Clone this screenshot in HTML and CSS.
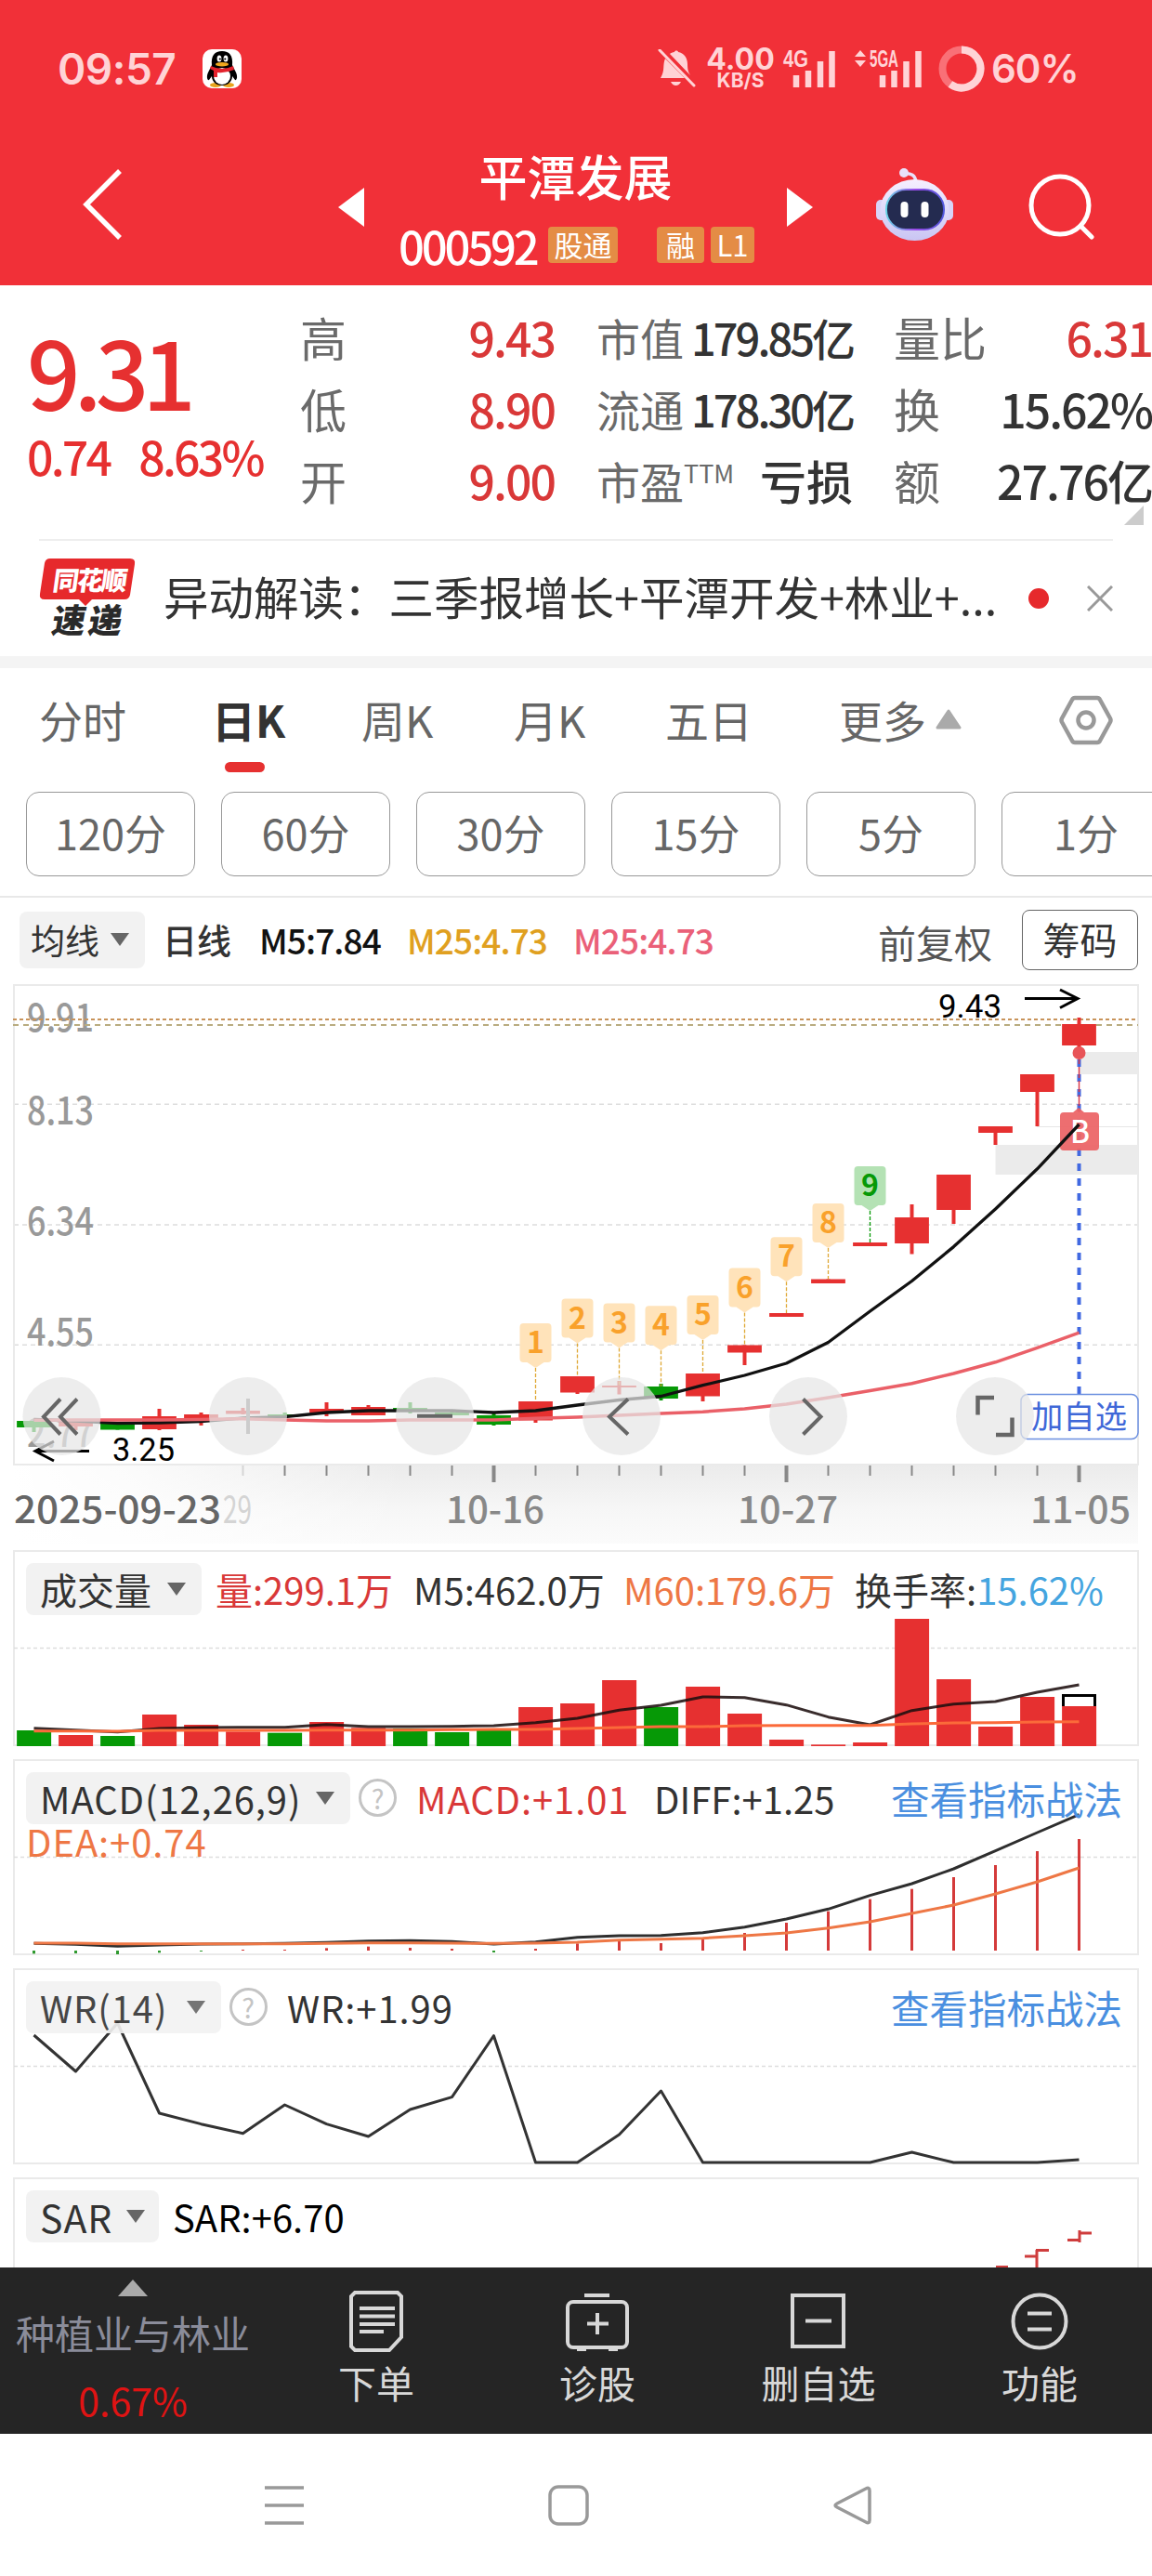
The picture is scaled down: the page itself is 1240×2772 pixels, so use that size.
FILE: index.html
```
<!DOCTYPE html>
<html lang="zh-CN">
<head>
  <meta charset="UTF-8" />
  <meta name="viewport" content="width=device-width, initial-scale=1.0" />
  <title>平潭发展 000592</title>
  <link rel="stylesheet" href="styles.css">
</head>
<body>
  <header>
    <div class="status-bar">
      <span class="clock">09:57</span>
      <svg class="qq" width="44" height="44" viewBox="0 0 44 44">
        <rect x="1" y="1" width="42" height="42" rx="10" fill="#fff"/>
        <ellipse cx="15" cy="39.500" rx="6" ry="2.500" fill="#e8a41c"/><ellipse cx="29" cy="39.500" rx="6" ry="2.500" fill="#e8a41c"/>
        <path d="M11 18C10 8 14 3 22 3s12 5 11 15l4 8c2 4 1 9-1 8l-3-4c0 6-5 10-11 10S11 36 11 30l-3 4c-2 1-3-4-1-8z" fill="#000"/>
        <ellipse cx="22" cy="30" rx="9" ry="9" fill="#fff"/>
        <path d="M10 19q12 6 24 0l1 4q-9 4-18 3v5h-4v-7l-4-2z" fill="#e3222c"/>
        <ellipse cx="19" cy="11" rx="2.400" ry="3.500" fill="#fff"/><ellipse cx="26" cy="11" rx="2.400" ry="3.500" fill="#fff"/>
        <circle cx="19.800" cy="11.500" r="1.100"/><circle cx="25.300" cy="11.500" r="1.100"/>
        <ellipse cx="22" cy="17.200" rx="7" ry="2.300" fill="#f0a81e"/>
      </svg>
      <svg class="bell" width="42" height="42" viewBox="0 0 42 42">
        <path d="M8 10C5 17 8 23 3 31h26z M13 5c1-1 3-2 5-2 0-2 4-2 4 0 6 1 10 6 10 13 0 6 1 9 3 12zM14 35h11q-2 4-5.500 4T14 35z" fill="#ffd3d6"/>
        <path d="M2 1l37 38" stroke="#ffd3d6" stroke-width="3" stroke-linecap="round"/>
      </svg>
      <div class="speed"><b>4.00</b><span>KB/S</span></div>
      <svg class="signal" width="58" height="44" viewBox="0 0 58 44">
        <text x="0" y="20" textLength="27" lengthAdjust="spacingAndGlyphs">4G</text>
        <path d="M14 29v13M27 24v18M40 14v28M52.500 3v39" />
      </svg>
      <svg class="signal" width="74" height="44" viewBox="0 0 74 44">
        <path class="arrows" d="M1 9l6-7 6 7zM1 13h12l-6 7z"/>
        <text x="17" y="20" textLength="31" lengthAdjust="spacingAndGlyphs">5GA</text>
        <path d="M31 29v13M43.500 24v18M56.500 14v28M69.500 3v39" />
      </svg>
      <svg class="battery" width="50" height="50" viewBox="0 0 50 50">
        <circle cx="25" cy="25" r="20.500" fill="none" stroke="#f97077" stroke-width="8"/>
        <path d="M25 4.500A20.500 20.500 0 1 1 12.900 41.600" fill="none" stroke="#ffd3d6" stroke-width="8"/>
      </svg>
      <span class="percent">60%</span>
    </div>
    <div class="title-bar">
      <svg class="back" width="46" height="80" viewBox="0 0 46 80"><path d="M41 4L5 40l36 36" fill="none" stroke="#fff" stroke-width="5.500"/></svg>
      <svg class="prev" width="28" height="42" viewBox="0 0 28 42"><path d="M28 0v42L0 21z" fill="#fff"/></svg>
      <div class="stock">
        <h1>平潭发展</h1>
        <div class="code"><span class="no">000592</span><i class="t1">股通</i><i class="t2">融</i><i class="t3">L1</i></div>
      </div>
      <svg class="next" width="28" height="42" viewBox="0 0 28 42"><path d="M0 0v42l28-21z" fill="#fff"/></svg>
      <svg class="robot" width="86" height="80" viewBox="0 0 86 80">
        <defs>
          <linearGradient id="shell" x1="0" y1="0" x2="0" y2="1"><stop offset="0" stop-color="#f6efff"/><stop offset="1" stop-color="#c9c5f3"/></linearGradient>
          <linearGradient id="rim" x1="0" y1="0" x2="1" y2="0"><stop offset="0" stop-color="#68d5e6"/><stop offset=".5" stop-color="#9a4be8"/><stop offset="1" stop-color="#5058dc"/></linearGradient>
        </defs>
        <path d="M31 7q13-2 14 9" fill="none" stroke="#e9e0fa" stroke-width="3.500"/>
        <circle cx="32" cy="6" r="5" fill="#e9e0fa"/>
        <rect x="2" y="35" width="12" height="22" rx="5" fill="#d8d4f7"/><rect x="73" y="35" width="12" height="22" rx="5" fill="#d8d4f7"/>
        <ellipse cx="43.500" cy="46" rx="37" ry="33" fill="url(#shell)"/>
        <rect x="13" y="24" width="62" height="43" rx="21" fill="#242b50" stroke="url(#rim)" stroke-width="2"/>
        <rect x="28.500" y="37" width="8" height="17" rx="4" fill="#fff"/><rect x="50.500" y="37" width="8" height="17" rx="4" fill="#fff"/>
      </svg>
      <svg class="search" width="74" height="74" viewBox="0 0 74 74"><g fill="none" stroke="#fff" stroke-width="5"><circle cx="35" cy="35" r="31"/><path d="M57 57l12 12" stroke-linecap="round"/></g></svg>
    </div>
  </header>

  <section class="quote">
    <div class="price">
      <div class="now">9.31</div>
      <div class="chg"><span>0.74</span><span>8.63%</span></div>
    </div>
    <dl class="c1">
      <dt>高</dt><dd class="up">9.43</dd>
      <dt>低</dt><dd class="up">8.90</dd>
      <dt>开</dt><dd class="up">9.00</dd>
    </dl>
    <dl class="c2">
      <dt>市值</dt><dd>179.85亿</dd>
      <dt>流通</dt><dd>178.30亿</dd>
      <dt>市盈<sup>TTM</sup></dt><dd class="cn">亏损</dd>
    </dl>
    <dl class="c3">
      <dt>量比</dt><dd class="up">6.31</dd>
      <dt>换</dt><dd>15.62%</dd>
      <dt>额</dt><dd>27.76亿</dd>
    </dl>
    <svg class="corner" width="21" height="21" viewBox="0 0 21 21"><path d="M21 0v21H0z" fill="#ccc"/></svg>
  </section>

  <section class="news">
    <svg width="108" height="92" viewBox="0 0 108 92">
      <path d="M12 3h86q6 0 5 6l-5 33q-1 5-6 5H57l-7 7-7-7H6q-6 0-5-6l5-33q1-5 6-5z" fill="#e6292c"/>
      <text class="l1" x="14" y="37" textLength="80" transform="skewX(-8) translate(5 0)">同花顺</text>
      <text class="l2" x="16" y="83" textLength="75" transform="skewX(-10) translate(11 0)">速递</text>
    </svg>
    <p>异动解读：三季报增长+平潭开发+林业+...</p>
    <span class="dot"></span>
    <svg class="close" width="28" height="28" viewBox="0 0 28 28"><path d="M1 1l26 26M27 1L1 27" stroke="#999" stroke-width="3"/></svg>
  </section>

  <nav class="tabs">
    <a>分时</a><a class="active">日K</a><a>周K</a><a>月K</a><a>五日</a>
    <a>更多<svg width="28" height="22" viewBox="0 0 28 22"><path d="M14 2l12 18H2z" fill="#aaa" stroke="#aaa" stroke-width="3" stroke-linejoin="round"/></svg></a>
    <svg class="gear" width="58" height="54" viewBox="0 0 58 54"><g fill="none" stroke="#999" stroke-width="4.500" stroke-linejoin="round"><path d="M17 3h24q2 0 3 2l11 20q1 2 0 4L44 49q-1 2-3 2H17q-2 0-3-2L3 29q-1-2 0-4L14 5q1-2 3-2z"/><circle cx="29" cy="27" r="8.500"/></g></svg>
  </nav>
  <div class="pills"><span>120分</span><span>60分</span><span>30分</span><span>15分</span><span>5分</span><span>1分</span></div>

  <div class="ma">
    <span class="drop">均线<svg class="tri" viewBox="0 0 20 14"><path d="M0 0h20L10 14z"/></svg></span>
    <span class="day">日线</span>
    <span class="m5">M5:7.84</span>
    <span class="m25">M25:4.73</span>
    <span class="m25 pink">M25:4.73</span>
    <span class="fq">前复权</span>
    <span class="chip">筹码</span>
  </div>

  <svg class="chart" id="kline" width="1240" height="610" viewBox="0 1050 1240 610"></svg>

  <section class="panel">
    <svg class="chart" id="vol" width="1240" height="225" viewBox="0 1660 1240 225"></svg>
    <div class="head vol-head">
      <span class="drop">成交量<svg class="tri" viewBox="0 0 20 14"><path d="M0 0h20L10 14z"/></svg></span>
      <span class="up">量:299.1万</span><span>M5:462.0万</span><span class="orange">M60:179.6万</span><span>换手率:<em>15.62%</em></span>
    </div>
  </section>
  <section class="panel">
    <svg class="chart" id="macd" width="1240" height="225" viewBox="0 1885 1240 225"></svg>
    <div class="head macd-head">
      <span class="drop">MACD(12,26,9)<svg class="tri" viewBox="0 0 20 14"><path d="M0 0h20L10 14z"/></svg></span>
      <span class="help">?</span>
      <span class="up">MACD:+1.01</span><span class="diff">DIFF:+1.25</span><span class="link">查看指标战法</span>
      <span class="orange dea">DEA:+0.74</span>
    </div>
  </section>
  <section class="panel">
    <svg class="chart" id="wr" width="1240" height="225" viewBox="0 2110 1240 225"></svg>
    <div class="head wr-head">
      <span class="drop">WR(14)<svg class="tri" viewBox="0 0 20 14"><path d="M0 0h20L10 14z"/></svg></span>
      <span class="help">?</span>
      <span>WR:+1.99</span><span class="link">查看指标战法</span>
    </div>
  </section>
  <section class="panel sar">
    <svg class="chart" id="sar" width="1240" height="104" viewBox="0 2335 1240 104"></svg>
    <div class="head sar-head">
      <span class="drop">SAR<svg class="tri" viewBox="0 0 20 14"><path d="M0 0h20L10 14z"/></svg></span>
      <span class="black">SAR:+6.70</span>
    </div>
  </section>

  <div class="bottom-nav">
    <a class="sector">
      <svg width="32" height="18" viewBox="0 0 32 18"><path d="M16 0l16 18H0z" fill="#aaa"/></svg>
      <span>种植业与林业</span>
      <b>0.67%</b>
    </a>
    <a>
      <svg width="68" height="68" viewBox="0 0 68 68"><path d="M11 3h46l4 4v44L48 65H11l-4-4V7z M16 20h38M16 28.500h38M16 37h38M16 45h26"/></svg>
      <span>下单</span>
    </a>
    <a>
      <svg width="72" height="68" viewBox="0 0 72 68"><rect x="4" y="13" width="64" height="49" rx="6"/><path d="M22 6h27M36 25v23M25 36.500h23M14 64h10M48 64h10"/></svg>
      <span>诊股</span>
    </a>
    <a>
      <svg width="68" height="68" viewBox="0 0 68 68"><path d="M6 6h55v55H6zM20 33.500h28"/></svg>
      <span>删自选</span>
    </a>
    <a>
      <svg width="68" height="68" viewBox="0 0 68 68"><circle cx="34" cy="34" r="28.500"/><path d="M21 25.500h26M21 42.500h26"/></svg>
      <span>功能</span>
    </a>
  </div>
  <div class="system-nav">
    <svg width="44" height="44" viewBox="0 0 44 44"><path d="M1 3h42M1 22h42M1 41h42"/></svg>
    <svg width="44" height="44" viewBox="0 0 44 44"><rect x="2" y="2" width="40" height="40" rx="9"/></svg>
    <svg width="44" height="44" viewBox="0 0 44 44"><path d="M36 4Q40 2 40 6v32q0 4-4 2L5 24q-4-2 0-4z"/></svg>
  </div>

  <script>
    const RED = '#e63030', GREEN = '#069906';
    const X = i => 36.5 + 45 * i;
    const line = (x1, y1, x2, y2, color, w, dash) =>
      `<line x1="${x1}" y1="${y1}" x2="${x2}" y2="${y2}" stroke="${color}" stroke-width="${w}"${dash ? ` stroke-dasharray="${dash}"` : ''}/>`;
    const rect = (x, y, w, h, fill, extra) => `<rect x="${x}" y="${y}" width="${w}" height="${h}" fill="${fill}" ${extra || ''}/>`;
    const poly = (ys, color, w) =>
      `<polyline points="${ys.map((y, i) => X(i) + ',' + y).join(' ')}" fill="none" stroke="${color}" stroke-width="${w}" stroke-linejoin="round"/>`;
    const text = (x, y, w, size, color, str, extra) =>
      `<text x="${x}" y="${y}" textLength="${w}" lengthAdjust="spacingAndGlyphs" font-size="${size}" fill="${color}" ${extra || ''}>${str}</text>`;
    const frame = (y, h) => rect(15, y, 1210, h, 'none', 'stroke="#eaeaea" stroke-width="2"');
    const draw = (id, html) => document.getElementById(id).innerHTML = html;

    // high, top, bottom, low
    const candles = [
      ['g',1528,1528,1535,1540],['r',1526,1529,1534,1538],['g',1529,1530,1537.5,1537.5],['r',1515,1523,1537,1538],['r',1519,1521,1525,1533],
      ['r',1514,1517,1520.500,1521],['g',1519,1521,1523,1523],['r',1508,1515,1519,1523],['r',1511,1513,1522,1522],['g',1508,1514,1517,1520],
      ['g',1518,1519,1522,1522],['g',1518,1522,1532,1533],['r',1507,1507,1527.5,1530],['r',1480,1480,1497.5,1499],['r',1485,1490,1492,1499.5],
      ['g',1488,1491,1504,1506],['r',1477,1477,1501.5,1507],['r',1446.5,1446.5,1454.5,1468],['r',1412,1412,1416,1416],['r',1375.5,1375.5,1380,1380],
      ['r',1336,1336,1340,1340],['r',1295,1309,1337,1348.5],['r',1263,1263,1301,1316],['r',1211,1211,1218,1231],['r',1155,1155,1174,1211],['r',1094,1101,1124,1132]
    ];
    const ma5 = [1526.5,1528,1530.7,1530,1528.5,1525,1523.7,1519,1517,1517,1517,1519,1517,1511,1505.5,1501.5,1489.7,1479,1466,1443.5,1410,1377.5,1340.6,1300,1256.8,1209];
    const ma25 = [1527.3,1527,1527,1527,1526.5,1525.7,1527,1528,1528,1527,1527,1527,1525.3,1524,1522,1520,1518.2,1515,1510,1503,1495.6,1487.7,1477,1464.8,1449.4,1433.2];

    let k = `<defs>
      <linearGradient id="axis" x1="0" y1="0" x2="0" y2="1"><stop offset="0" stop-color="#ebebeb"/><stop offset=".55" stop-color="#f6f6f6"/><stop offset="1" stop-color="#fbfbfb"/></linearGradient>
      <linearGradient id="fade" x1="0" y1="0" x2="1" y2="0"><stop offset="0" stop-color="#fff"/><stop offset=".3" stop-color="#fff" stop-opacity=".8"/><stop offset="1" stop-color="#fff" stop-opacity="0"/></linearGradient>
    </defs>`;
    k += rect(15, 1575, 1210, 85, 'url(#axis)') + rect(15, 1575, 420, 85, 'url(#fade)');
    [1187.2, 1317, 1446.2].forEach(y => k += line(15, y, 1225, y, '#ddd', 1.5, '5 4'));
    k += frame(1059, 516);
    [['9.91',1108.5],['8.13',1208.5],['6.34',1328],['4.55',1447],['2.77',1556]].forEach(([s, y]) =>
      k += text(29, y, 72, 41, '#999', s, 'font-weight="500"'));
    k += line(14, 1096, 1225, 1096, '#c8935a', 2, '4 3') + line(14, 1102, 1225, 1102, '#b9ac80', 2, '6 5');
    k += rect(1162, 1131, 63, 24, '#ebebeb') + rect(1071.5, 1231, 153.5, 32, '#ebebeb') + line(1116, 1211.5, 1225, 1211.5, '#e6e6e6', 1);
    k += line(1161.5, 1139, 1161.5, 1500, '#4169e1', 4, '8 8') + line(1161.5, 1132, 1161.5, 1196, '#dc3b4c', 1.5, '12 3');
    candles.forEach(([c, h, t, b, l], i) => {
      const color = c === 'g' ? GREEN : RED;
      k += line(X(i), h, X(i), l, color, 4) + rect(X(i) - 18.400, t, 36.800, b - t, color);
    });
    // sequence badges 1-9
    [1423,1396.5,1401.5,1404.3,1393,1363.5,1330.3,1294,1254].forEach((y, n) => {
      const x = X(12 + n), nine = n === 8, c = nine ? '#069906' : '#f9a12b';
      k += line(x, y + 48, x, candles[12 + n][2], nine ? '#069906' : '#dfa835', 1.3, '4 2');
      k += `<path d="M${x-13} ${y}h26q4 0 4 4v34q0 4-4 4h-4l-9 6-9-6h-4q-4 0-4-4v-34q0-4 4-4z" fill="${nine ? '#b4e2b4' : '#ffe3ba'}"/>`;
      k += `<text x="${x}" y="${y + 32}" text-anchor="middle" font-size="32" font-weight="700" fill="${c}">${n + 1}</text>`;
    });
    k += `<path d="M1146 1196h9l6-5 6 5h12q4 0 4 4v33q0 4-4 4h-34q-4 0-4-4v-33q0-4 4-4z" fill="#ec6365" opacity=".93"/><circle cx="1161.500" cy="1132" r="7" fill="#e85458"/>`;
    k += text(1152, 1229, 21, 34, '#fff', 'B', 'font-weight="500"');
    k += poly(ma5, '#111', 3.3) + poly(ma25, '#ea6068', 3.5);
    k += text(121, 1571, 67, 35, '#000', '3.25', 'class="rb"') + text(1010, 1093.5, 68, 35, '#000', '9.43', 'class="rb"');
    k += '<path d="M96 1560.500H38M58 1571l-20-10.500L58 1550M1103 1073.500h56M1141 1064l19 9.500-19 10" fill="none" stroke="#000" stroke-width="3"/>';
    k += rect(1099, 1499.5, 126, 48, '#fff', 'rx="7" stroke="#6b8fe0" stroke-width="1.5"') + text(1110, 1536, 103, 34, '#3f68d8', '加自选');
    // ticks and dates
    for (let i = 5; i < 26; i++) {
      const major = i === 11 || i === 18 || i === 25;
      k += line(X(i), 1576, X(i), major ? 1594 : 1587, i === 5 ? '#d5d5d5' : '#888', major ? 4 : 2);
    }
    k += text(240, 1637.5, 31, 40, '#d4d4d4', '29') + text(15, 1637.5, 223, 40, '#666', '2025-09-23', 'class="date"');
    k += text(480, 1637.5, 106, 40, '#888', '10-16', 'class="date"') + text(794, 1637.5, 108, 40, '#888', '10-27', 'class="date"') + text(1109, 1637.5, 108, 40, '#888', '11-05', 'class="date"');
    // chart controls
    [66.4,267,468,669,870,1071].forEach(x => k += `<circle cx="${x}" cy="1523" r="42" fill="#e6e6e6" fill-opacity=".72"/>`);
    k += `<g fill="none" stroke="#666" stroke-width="4"><path d="M65 1504.500l-18 19 18 19M83 1504.500l-18 19 18 19M449 1522.800h38M676 1504.500l-20 19 20 19M864.500 1504.500l19 19-19 19"/><path d="M1052.500 1521.500v-18.500h17.500M1089.500 1524.500v18.500h-17.500" stroke-width="4.500"/><path d="M267 1504v38" stroke="#ccc"/></g>`;
    draw('kline', k);

    // volume
    const V = y => 1650 + y / 3;
    const vols = [633,648,651,582,615,637,641,606,625,627,639,633,558,546,471,558,492,579,663,679,672,273,468,621,525,555];
    const greens = [0, 2, 6, 9, 10, 11, 15];
    let v = frame(1668, 209) + line(15, 1772.5, 1225, 1772.5, '#ddd', 1.3, '4 3');
    vols.forEach((y, i) => v += rect(X(i) - 18.400, V(y), 37, 1878 - V(y), greens.includes(i) ? GREEN : RED));
    v += '<path d="M1144.500 1835v-11.500h34v11.500" fill="none" stroke="#000" stroke-width="3"/>';
    v += poly([626,632,638,627,624,623,623,614,621,621,620,618,608,594,568,552,525,527,551,590,615,569,548,540,510,486].map(V), 'rgba(30,15,15,.88)', 3);
    v += poly([635,635,636,633,633,633,633,632,632,632,631,630,630,627,624,621,621,618,617,617,617,612,609,608,606,605].map(V), '#fb6a3a', 3);
    draw('vol', v);

    // macd
    let m = frame(1893, 209) + line(15, 1997.5, 1225, 1997.5, '#ddd', 1.3, '4 3');
    [1354,1353,1356,1351,1347,1341,1341,1336,1331,1335,1338,1350,1338,1321,1314,1320,1308,1287,1254,1217,1178,1145,1107,1068,1023,984].forEach((y, i) =>
      m += line(X(i), V(1344), X(i), V(y), y > 1344 ? '#2f9a2f' : '#d43a3a', 3));
    m += poly([1321,1324,1330,1326,1323,1322,1321,1318,1313,1312,1315,1323,1316,1301,1296,1295,1286,1268,1242,1210,1166,1128,1080,1022,963,905].map(V), '#2e2e2e', 3);
    m += poly([1320,1320,1322,1322,1322,1322,1322,1321,1319,1319,1320,1321,1320,1317,1310,1307,1304,1296,1287,1271,1251,1224,1197,1161,1122,1077].map(V), '#ee7745', 3);
    draw('macd', m);

    // wr
    const W = y => 2100 + y / 3;
    draw('wr', frame(2118, 209) + line(15, 2222.5, 1225, 2222.5, '#ddd', 1.3, '4 3') +
      poly([267,384,228,519,554,584,492,554,594,507,467,269,678,678,588,447,678,678,678,678,678,645,678,678,678,669].map(W), '#333', 3));

    // sar
    draw('sar', frame(2343, 209) + '<path d="M1149 2409.500h13M1162 2399v13M1162 2402h13M1103 2427h13M1116 2420v20M1115 2420.500h14M1072 2438.500h13" fill="none" stroke="#cf3d3d" stroke-width="3"/>');
  </script>
</body>
</html>
```
FILE: styles.css
```
* {
  box-sizing: border-box;
}

body {
  margin: 0;
  width: 1240px;
  height: 2772px;
  overflow: hidden;
  font-family: 'Noto Sans CJK SC', sans-serif;
  background: #fff;
  color: #333;
  font-size: 40px;
  white-space: nowrap;
}

svg {
  display: block;
  flex: none;
}

h1, p, dl, dd {
  margin: 0;
}

header {
  height: 307px;
  background: #f13038;
  color: #fff;
}

.status-bar {
  height: 110px;
  padding: 37px 0 0 62px;
  display: flex;
  align-items: center;
  color: #ffd3d6;
  font-family: 'Inter', sans-serif;
}

.clock {
  width: 155px;
  font-size: 46px;
  font-weight: 600;
  letter-spacing: -0.5px;
}

.qq {
  margin-right: 447px;
}

.bell {
  margin-right: 10px;
}

.speed {
  width: 74px;
  display: flex;
  flex-direction: column;
  align-items: center;
  line-height: 20px;
}

.speed b {
  font-size: 32px;
  font-weight: 700;
  line-height: 26px;
}

.speed span {
  font-size: 21px;
  font-weight: 700;
}

.signal {
  margin-left: 9px;
  overflow: visible;
}

.signal + .signal {
  margin-left: 18px;
}

.signal text {
  font: 700 26px 'Liberation Sans', sans-serif;
  fill: #ffd3d6;
}

.signal path {
  stroke: #ffd3d6;
  stroke-width: 6.5;
}

.signal .arrows {
  stroke: none;
  fill: #ffd3d6;
}

.battery {
  margin-left: 17px;
}

.percent {
  margin-left: 7px;
  font-size: 42px;
  font-weight: 600;
  letter-spacing: -1px;
}

.title-bar {
  height: 197px;
  display: flex;
  padding-left: 88px;
}

.back {
  margin: 70px 230px 0 0;
}

.prev, .next {
  margin-top: 92px;
}

.stock {
  width: 455px;
  padding-top: 47px;
}

.stock h1 {
  font-size: 52px;
  line-height: 64px;
  font-weight: 500;
  text-align: center;
}

.code {
  display: flex;
  align-items: center;
  height: 84px;
  padding-left: 37px;
}

.no {
  width: 161px;
  font-size: 49px;
  font-weight: 500;
  letter-spacing: -3.2px;
}

.code i {
  height: 39px;
  background: #e48c45;
  border-radius: 4px;
  font-style: normal;
  font-size: 31px;
  line-height: 38px;
  text-align: center;
}

.t1 {
  width: 75px;
  margin-right: 42px;
}

.t2 {
  width: 51px;
  margin-right: 7px;
}

.t3 {
  width: 47px;
}

.robot {
  margin: 70px 79px 0 66px;
}

.search {
  margin-top: 76px;
}

.quote {
  position: relative;
  height: 273px;
  padding-top: 17px;
  display: flex;
}

.price {
  width: 323px;
  padding-left: 29px;
  color: #e63030;
}

.now {
  font-size: 101px;
  font-weight: 500;
  line-height: 110px;
  letter-spacing: -7px;
  margin-top: 19px;
}

.chg {
  display: flex;
  gap: 31px;
  font-size: 50px;
  font-weight: 500;
  line-height: 60px;
  margin-top: 7px;
  letter-spacing: -2.8px;
}

.quote dl {
  display: grid;
  grid-template-columns: 94px 1fr;
  grid-auto-rows: 77px;
  line-height: 77px;
}

.quote dt {
  font-size: 50px;
  color: #6a6a6a;
}

.quote dd {
  font-size: 50px;
  font-weight: 500;
  text-align: right;
  letter-spacing: -2px;
}

.quote .up, .head .up {
  color: #d93838;
}

.quote .c1 {
  width: 274px;
}

.quote .c2 {
  width: 276px;
  margin-left: 45px;
}

.quote .c2 dt, .quote .c2 dd {
  font-size: 47px;
}

.quote .c2 dd {
  letter-spacing: -3px;
}

.quote .c2 dd.cn {
  font-size: 50px;
  letter-spacing: 0;
}

.quote .c3 {
  width: 278px;
  margin-left: 44px;
}

.quote sup {
  font-size: 27px;
  line-height: 20px;
  vertical-align: 17px;
}

.corner {
  position: absolute;
  left: 1210px;
  top: 237px;
}

.news {
  margin: 0 42px;
  height: 126px;
  border-top: 2px solid #eee;
  display: flex;
  align-items: center;
}

.news .l1, .news .l2 {
  font-weight: 900;
  font-size: 28px;
  fill: #fff;
}

.news .l2 {
  font-size: 36px;
  fill: #2a2a2a;
}

.news p {
  width: 931px;
  padding: 0 0 6px 26px;
  font-size: 48.5px;
}

.dot {
  margin: 0 41px 0 26px;
  flex: none;
  width: 22px;
  height: 22px;
  border-radius: 50%;
  background: #e6292c;
}

.tabs {
  border-top: 13px solid #f4f4f4;
  height: 146px;
  display: flex;
  padding: 24px 0 0 42px;
  color: #666;
  font-size: 47px;
  line-height: 62px;
}

.tabs a {
  display: flex;
  align-items: center;
  height: 62px;
}

.tabs a:nth-child(1) { width: 186px; }
.tabs a:nth-child(2) { width: 161px; }
.tabs a:nth-child(3) { width: 164px; }
.tabs a:nth-child(4) { width: 163px; }
.tabs a:nth-child(5) { width: 187px; }
.tabs a:nth-child(6) { width: 237px; }

.tabs a svg {
  margin-left: 10px;
}

.tabs .active {
  position: relative;
  color: #333;
  font-weight: 700;
}

.active::after {
  content: '';
  position: absolute;
  left: 14px;
  top: 77px;
  width: 43px;
  height: 11px;
  border-radius: 6px;
  background: #e63030;
}

.gear {
  margin-top: 5px;
}

.pills {
  height: 114px;
  padding-left: 28px;
  display: flex;
  gap: 28px;
  overflow: hidden;
  border-bottom: 2px solid #e8e8e8;
}

.pills span {
  flex: none;
  width: 182px;
  height: 91px;
  border: 1.5px solid #999;
  border-radius: 14px;
  color: #666;
  font-size: 45px;
  line-height: 86px;
  text-align: center;
}

.ma {
  height: 85px;
  padding: 5px 15px 0 21px;
  display: flex;
  align-items: center;
  font-size: 37px;
}

.drop {
  display: flex;
  align-items: center;
  background: #f2f2f2;
  border-radius: 8px;
  height: 56px;
  color: #333;
}

.ma .drop {
  width: 135px;
  height: 61px;
  padding-left: 12px;
}

.tri {
  width: 20px;
  height: 14px;
  margin: 0 17px 0 12px;
  fill: #666;
}

.day {
  width: 123px;
  padding-left: 19px;
  font-weight: 500;
}

.m5 {
  width: 159px;
  color: #111;
  font-weight: 500;
}

.m25 {
  width: 179px;
  color: #e0a020;
  font-weight: 500;
}

.m25.pink {
  width: 328px;
  color: #ea6078;
}

.m5, .m25 {
  letter-spacing: -0.9px;
}

.fq {
  width: 155px;
  padding-top: 4px;
  font-size: 41px;
  color: #555;
}

.chip {
  width: 125px;
  height: 65px;
  border: 1.5px solid #666;
  border-radius: 8px;
  font-size: 40px;
  line-height: 60px;
  text-align: center;
}

.chart text {
  font-family: 'Noto Sans CJK SC', sans-serif;
}

.chart .rb {
  font-family: 'Roboto', sans-serif;
}

.chart .date {
  font-weight: 500;
}

.panel {
  display: grid;
}

.panel .chart, .head {
  grid-area: 1 / 1;
}

.sar {
  height: 104px;
  overflow: hidden;
}

.head {
  display: grid;
  align-content: start;
  padding: 21px 0 0 28px;
  line-height: 56px;
}

.head .drop {
  justify-content: space-between;
  padding-left: 15px;
}

.head .tri {
  margin-left: 0;
}

.vol-head {
  grid-template-columns: 204px 213px 226px 249px auto;
}

.vol-head .drop {
  width: 189px;
}

.macd-head {
  grid-template-columns: 358px 62px 256px 255px auto;
}

.macd-head .drop {
  width: 349px;
  letter-spacing: 0.9px;
}

.macd-head .up, .wr-head span, .dea {
  letter-spacing: 0.9px;
}

.wr-head {
  grid-template-columns: 219px 62px 650px auto;
}

.wr-head .drop {
  width: 210px;
  opacity: 0.9;
}

.sar-head {
  grid-template-columns: 158px auto;
}

.sar-head .drop {
  width: 143px;
  font-size: 41px;
  letter-spacing: 1px;
}

.sar-head .tri {
  margin-right: 15px;
}

.head em {
  font-style: normal;
  color: #45a5e0;
}

.orange {
  color: #ee7745;
}

.dea {
  line-height: 36px;
}

.head .link {
  color: #4a8fe0;
  font-size: 41.5px;
  letter-spacing: 0;
}

.black {
  color: #000;
}

.help {
  width: 41px;
  height: 41px;
  margin-top: 7px;
  border: 3px solid #c4c4c4;
  border-radius: 50%;
  color: #c4c4c4;
  font-size: 29px;
  line-height: 34px;
  text-align: center;
}

.bottom-nav {
  height: 179px;
  background: #252525;
  color: #d8d8d8;
  display: flex;
}

.bottom-nav a {
  width: 238px;
  display: flex;
  flex-direction: column;
  align-items: center;
  padding-top: 24px;
  font-size: 41px;
  line-height: 60px;
}

.bottom-nav a:not(.sector) svg {
  fill: none;
  stroke: #d8d8d8;
  stroke-width: 4;
  margin-bottom: 1px;
}

.bottom-nav a.sector {
  width: 286px;
  padding-top: 13px;
  color: #8a8c9a;
}

.sector span {
  margin-top: 9px;
  font-size: 42px;
}

.sector b {
  margin-top: 12px;
  color: #e01313;
  font-weight: 400;
  font-size: 41px;
}

.system-nav {
  height: 154px;
  display: flex;
  gap: 262px;
  padding: 55px 0 0 284px;
}

.system-nav svg {
  fill: none;
  stroke: #999;
  stroke-width: 3.5;
}
```
